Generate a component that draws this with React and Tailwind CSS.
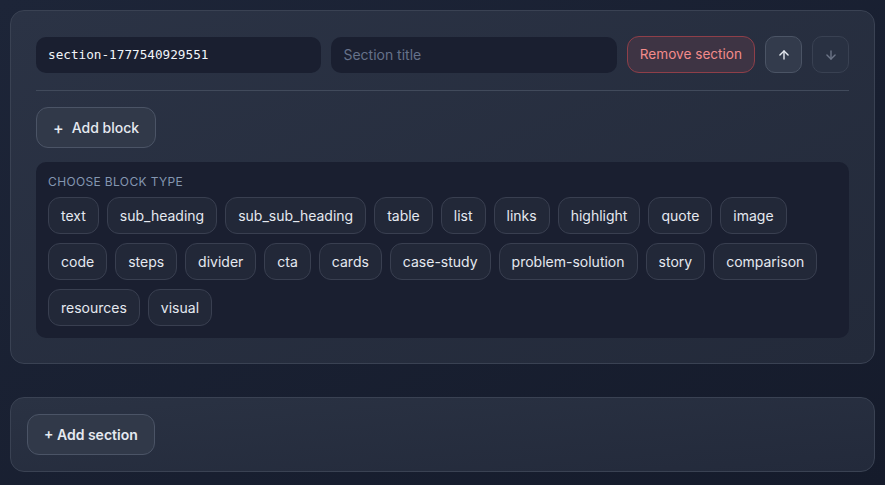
const BLOCK_TYPES = [
  "text", "sub_heading", "sub_sub_heading", "table", "list", "links", "highlight", "quote", "image",
  "code", "steps", "divider", "cta", "cards", "case-study", "problem-solution", "story", "comparison",
  "resources", "visual",
];

function Arrow({ down = false }) {
  return (
    <svg width="14" height="14" viewBox="0 0 24 24" fill="none" stroke="currentColor" strokeWidth="2.4" strokeLinecap="round" strokeLinejoin="round">
      {down ? (
        <>
          <path d="M12 5v14" />
          <path d="m19 12-7 7-7-7" />
        </>
      ) : (
        <>
          <path d="M12 19V5" />
          <path d="m5 12 7-7 7 7" />
        </>
      )}
    </svg>
  );
}

function SectionCard() {
  return (
    <div className="rounded-[14px] border border-[#3a4253] bg-gradient-to-br from-[#2b3345] to-[#232a3a] p-[25px]">
      <div className="flex items-center gap-[10px]">
        <div className="flex h-9 flex-1 items-center rounded-[10px] bg-[#1a1f30] px-3 text-[12.7px] text-[#f1f5f9] font-['DejaVu_Sans_Mono',monospace]">
          section-1777540929551
        </div>
        <div className="flex h-9 flex-1 items-center rounded-[10px] bg-[#1a1f30] px-3 text-[14px] text-[#66728a]">
          Section title
        </div>
        <button className="h-[37px] rounded-[12px] border border-[#8f3f49] bg-[#3e3444] px-3 text-[13.6px] text-[#f38b8b]">
          Remove section
        </button>
        <button className="flex h-[37px] w-[37px] items-center justify-center rounded-[10px] border border-[#4b5465] bg-[#333b4c] text-[#e5e9f0]">
          <Arrow />
        </button>
        <button className="flex h-[37px] w-[37px] items-center justify-center rounded-[10px] border border-[#394152] bg-[#293142] text-[#6c7587]">
          <Arrow down />
        </button>
      </div>

      <div className="mt-[17px] h-px bg-[#414a5b]" />

      <button className="mt-4 flex h-[41px] items-center gap-2 rounded-[12px] border border-[#4b5466] bg-[#313949] px-4 text-[14px] font-medium text-[#e5e9f0]">
        <span className="text-[16px] leading-none">+</span>
        Add block
      </button>

      <div className="mt-[14px] rounded-[10px] bg-[#1a1f30] p-3">
        <div className="text-[12px] uppercase tracking-[0.03em] text-[#8496b0] leading-4">Choose block type</div>
        <div className="mt-[7px] flex flex-wrap gap-x-2 gap-y-[9px]">
          {BLOCK_TYPES.map((t) => (
            <button
              key={t}
              className="h-[37px] rounded-[12px] border border-[#393f50] bg-[#222838] px-3 text-[14px] text-[#e5e9f0]"
            >
              {t}
            </button>
          ))}
        </div>
      </div>
    </div>
  );
}

export default function App() {
  return (
    <div className="min-h-[485px] bg-gradient-to-br from-[#1d2538] to-[#151b2b] p-[10px] font-['Inter',sans-serif]">
      <SectionCard />
      <div className="mt-[33px] rounded-[14px] border border-[#3a4253] bg-gradient-to-br from-[#2a3243] to-[#232a3b] p-4">
        <button className="h-[41px] rounded-[12px] border border-[#4b5466] bg-[#313949] px-4 text-[14px] font-semibold text-[#e5e9f0]">
          + Add section
        </button>
      </div>
    </div>
  );
}
